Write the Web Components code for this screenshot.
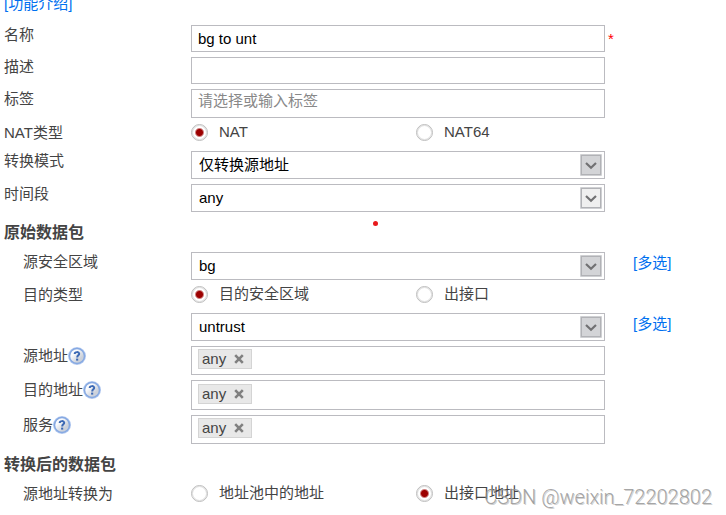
<!DOCTYPE html>
<html lang="zh-CN">
<head>
<meta charset="utf-8">
<title>NAT</title>
<style>
html{background:#fff}
body{margin:0;font:15px/18px "Liberation Sans","Noto Sans CJK SC",sans-serif;color:#444}
</style>
</head>
<body>
<nat-policy-form></nat-policy-form>
<script>
const define = (name, html, setup) => customElements.define(name, class extends HTMLElement {
  connectedCallback() {
    if (this.shadowRoot) return;
    const t = document.createElement('template');
    t.innerHTML = html;
    this.attachShadow({mode: 'open'}).append(t.content.cloneNode(true));
    if (setup) setup(this, this.shadowRoot);
  }
});

define('form-row', `
<style>
:host{display:grid;grid-template-columns:187px minmax(0,1fr) 121px;min-height:23px;align-items:start}
.label{display:flex;align-items:center;height:20px;white-space:nowrap}
:host([indent]) .label{padding-left:19px}
::slotted([slot=aside]){display:block}
</style>
<div class="label"><span></span><slot name="help"></slot></div>
<slot></slot>
<slot name="aside"></slot>`, (h, r) => {
  r.querySelector('span').textContent = h.getAttribute('label') || '';
});

define('section-title', `
<style>
:host{display:grid;grid-template-columns:187px minmax(0,1fr) 121px;height:30px}
h2{margin:0;font-size:16px;line-height:32px;font-weight:bold;white-space:nowrap}
</style>
<h2></h2><slot></slot>`, (h, r) => {
  r.querySelector('h2').textContent = h.getAttribute('label');
});

define('red-dot', `
<style>
:host{display:block;padding:4px 0 0 182px}
i{display:block;width:5px;height:5px;border-radius:50%;background:#e8191c}
</style><i></i>`);

define('text-field', `
<style>
:host{display:block}
input{display:block;box-sizing:border-box;width:100%;height:27px;border:1px solid #bbbbc0;border-radius:0;background:#fff;margin:0;padding:0 6px;font:inherit;color:#000;outline:none}
:host([tall]) input{height:29px;padding-bottom:6px}
input::placeholder{color:#888;opacity:1}
</style>
<input type="text">`, (h, r) => {
  const i = r.querySelector('input');
  i.value = h.getAttribute('value') || '';
  i.placeholder = h.getAttribute('placeholder') || '';
  i.setAttribute('aria-label', h.getAttribute('name'));
});

define('select-field', `
<style>
:host{display:grid}
select,svg{grid-area:1/1}
select{appearance:none;box-sizing:border-box;width:100%;height:28px;border:1px solid #bbbbc0;border-radius:0;background:#fff;margin:0;padding:0 30px 0 7px;font:inherit;color:#000;outline:none}
svg{justify-self:end;align-self:center;margin-right:3px;pointer-events:none;--fill:#d3d4d7}
:host([light]) svg{--fill:#efefef}
</style>
<select><option></option></select>
<svg width="22" height="22" viewBox="0 0 22 22" aria-hidden="true">
<rect width="22" height="22" rx="1" fill="#cfd0d3"/>
<rect x="1" y="1" width="20" height="20" fill="#b1b2b6"/>
<rect x="2" y="2" width="18" height="18" style="fill:var(--fill)"/>
<path d="M6 9L11 13.8L16 9" fill="none" stroke="#717173" stroke-width="2.2"/>
</svg>`, (h, r) => {
  r.querySelector('option').textContent = h.getAttribute('value');
  r.querySelector('select').setAttribute('aria-label', h.getAttribute('name'));
});

define('radio-pair', `
<style>
:host{display:grid;grid-template-columns:225fr 189fr}
label{display:flex;align-items:center;gap:11px;height:18px;white-space:nowrap}
input{appearance:none;box-sizing:border-box;width:17px;height:17px;margin:0;border:1px solid #bdbdbd;box-shadow:inset 0 0 0 1px #e2e2e2;border-radius:50%;background:#fff}
input:checked{background:radial-gradient(circle,#9c0000 3px,#fff 5px)}
</style>
<label><input type="radio" name="r"><span></span></label>
<label><input type="radio" name="r"><span></span></label>`, (h, r) => {
  const s = r.querySelectorAll('span');
  s[0].textContent = h.getAttribute('first');
  s[1].textContent = h.getAttribute('second');
  r.querySelectorAll('input')[+h.getAttribute('selected')].checked = true;
});

define('tag-field', `
<style>
:host{display:flex;align-items:flex-start;box-sizing:border-box;height:29px;border:1px solid #bbbbc0;padding:2px 6px}
:host([tall]){height:30px;padding-top:3px}
.tag{display:flex;align-items:center;box-sizing:border-box;width:54px;height:20px;border:1px solid #d4d4d4;background:#e8e8e8;padding:0 7px 0 3px;justify-content:space-between}
button{display:block;border:0;background:none;padding:0;margin:0;width:10px;height:10px}
svg{display:block}
</style>
<span class="tag"><span>any</span><button type="button" aria-label="删除"><svg width="10" height="10" viewBox="0 0 10 10"><path d="M1.2 1.2L8.8 8.8M8.8 1.2L1.2 8.8" stroke="#808080" stroke-width="2.6"/></svg></button></span>`);

define('help-icon', `
<style>
:host{display:block}
button{display:block;border:0;background:none;padding:0;margin:0}
svg{display:block}
</style>
<button type="button" aria-label="帮助"><svg width="18" height="18" viewBox="0 0 18 18">
<defs><linearGradient id="g" x1="0" y1="0" x2="1" y2="1"><stop offset="0.3" stop-color="#fafbfd"/><stop offset="0.7" stop-color="#ccd1da"/></linearGradient></defs>
<circle cx="9" cy="9" r="9" fill="#b4caf0"/>
<circle cx="9" cy="9" r="7.5" fill="url(#g)" stroke="#86a9e2" stroke-width="1.5"/>
<path d="M6.7 6.9C6.7 4.6 11.2 4.5 11.2 6.8C11.2 8.4 9.2 8.3 9.2 10.4" fill="none" stroke="#3c69b4" stroke-width="2"/>
<rect x="8.1" y="11.6" width="2.1" height="2" fill="#3c69b4"/>
</svg></button>`);

define('text-link', `
<style>
:host{display:block}
a{color:#0070f0;text-decoration:none}
</style><a href="#"><slot></slot></a>`);

define('water-mark', `
<style>
:host{position:absolute;right:14px;bottom:6px;font:300 20px/24px Roboto,"Liberation Sans",sans-serif;color:rgba(150,150,150,.85);text-shadow:1px 1px 0 rgba(120,120,120,.35);white-space:nowrap;pointer-events:none}
</style><slot></slot>`);

define('nat-policy-form', `
<style>
:host{display:block;position:relative}
form{display:flex;flex-direction:column;gap:5px;padding:0 0 8px 4px}
header{display:flex;align-items:flex-end;box-sizing:border-box;height:20px;padding-bottom:7px;overflow:hidden}
.required{color:#f00;padding:5px 0 0 3px}
.more{padding:2px 0 0 28px}
</style>
<form>
<header><text-link>[功能介绍]</text-link></header>
<form-row label="名称"><text-field name="名称" value="bg to unt"></text-field><span slot="aside" class="required">*</span></form-row>
<form-row label="描述"><text-field name="描述"></text-field></form-row>
<form-row label="标签"><text-field tall name="标签" placeholder="请选择或输入标签"></text-field></form-row>
<form-row label="NAT类型"><radio-pair first="NAT" second="NAT64" selected="0"></radio-pair></form-row>
<form-row label="转换模式"><select-field name="转换模式" value="仅转换源地址"></select-field></form-row>
<form-row label="时间段"><select-field light name="时间段" value="any"></select-field></form-row>
<section-title label="原始数据包"><red-dot></red-dot></section-title>
<form-row indent label="源安全区域"><select-field name="源安全区域" value="bg"></select-field><text-link slot="aside" class="more">[多选]</text-link></form-row>
<form-row indent label="目的类型"><radio-pair first="目的安全区域" second="出接口" selected="0"></radio-pair></form-row>
<form-row indent><select-field name="目的安全区域" value="untrust"></select-field><text-link slot="aside" class="more">[多选]</text-link></form-row>
<form-row indent label="源地址"><help-icon slot="help"></help-icon><tag-field></tag-field></form-row>
<form-row indent label="目的地址"><help-icon slot="help"></help-icon><tag-field tall></tag-field></form-row>
<form-row indent label="服务"><help-icon slot="help"></help-icon><tag-field></tag-field></form-row>
<section-title label="转换后的数据包"></section-title>
<form-row indent label="源地址转换为"><radio-pair first="地址池中的地址" second="出接口地址" selected="1"></radio-pair></form-row>
</form>
<water-mark>CSDN @weixin_72202802</water-mark>`);
</script>
</body>
</html>
